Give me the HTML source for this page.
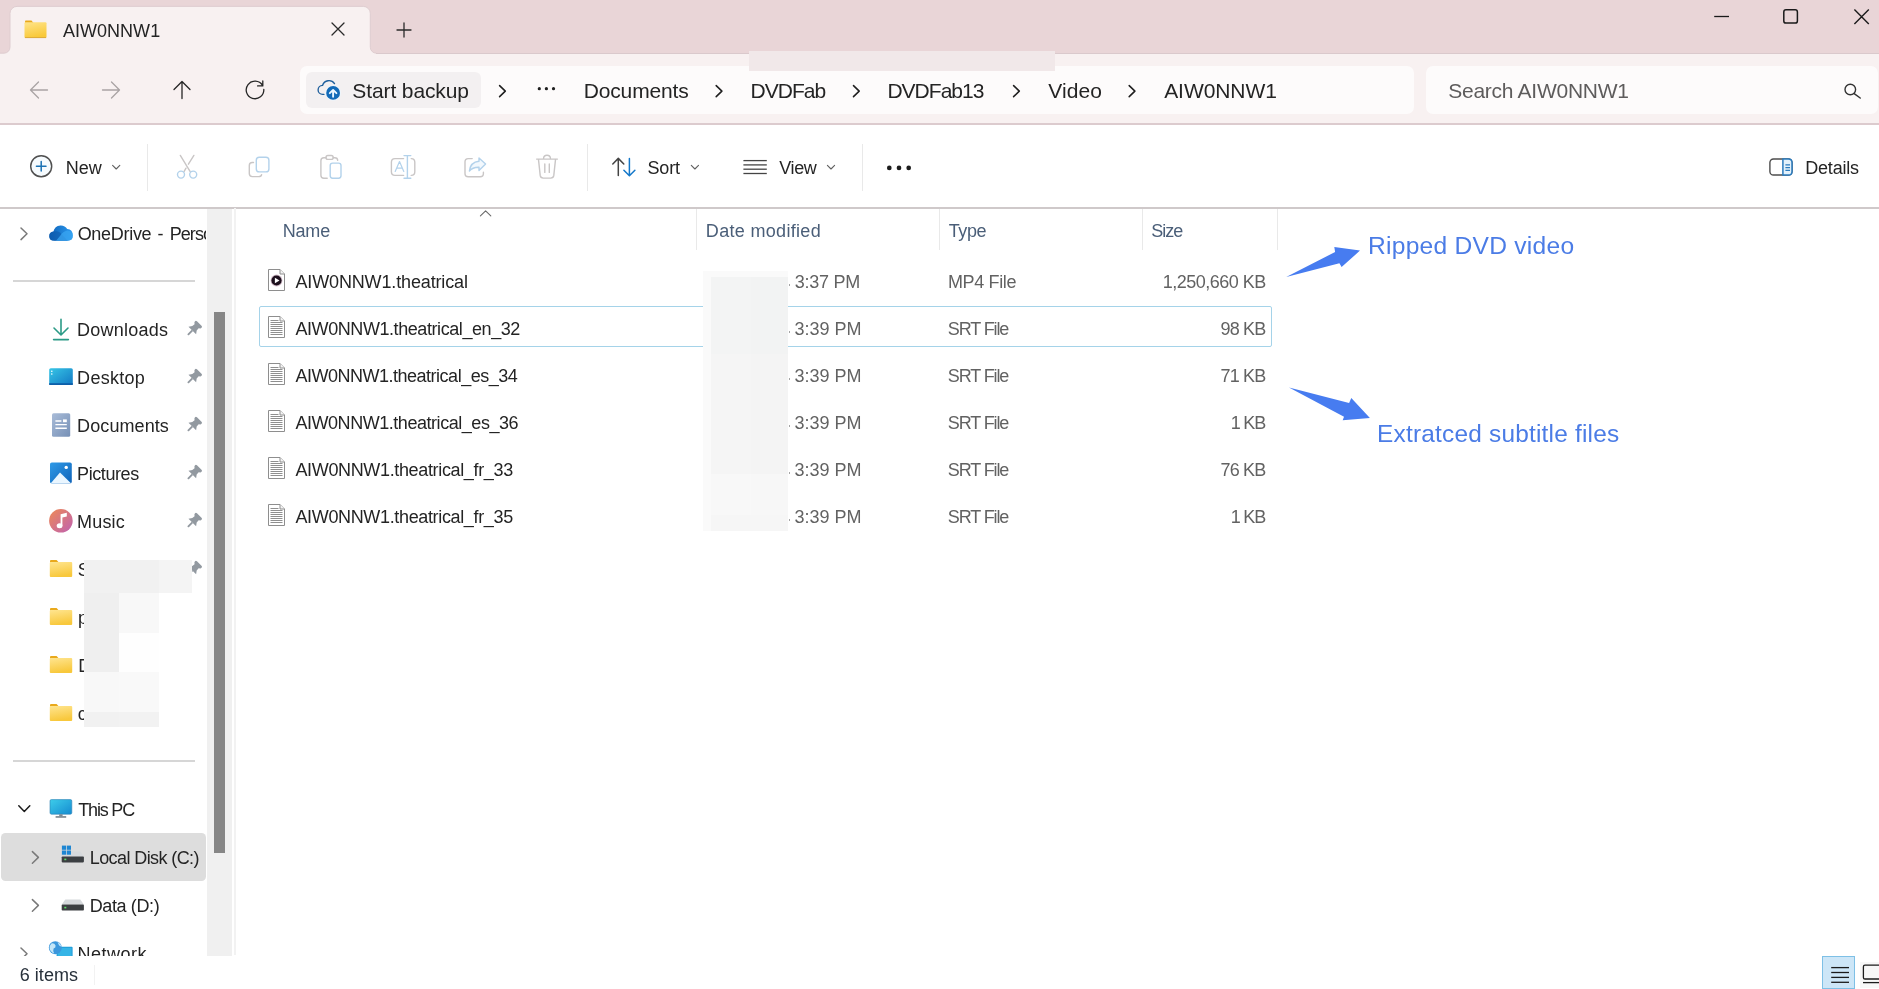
<!DOCTYPE html>
<html lang="en"><head><meta charset="utf-8"><title>AIW0NNW1</title>
<style>
html,body{margin:0;padding:0;}
body{width:1879px;height:989px;overflow:hidden;position:relative;background:#fff;font-family:'Liberation Sans',sans-serif;}
.a{position:absolute;}
.t{position:absolute;white-space:pre;line-height:1;}
svg{position:absolute;overflow:visible;}
.clip{position:absolute;overflow:hidden;}
#root{position:absolute;left:0;top:0;width:1879px;height:989px;will-change:transform;}

</style></head>
<body>
<div id="root">
<div class="a" style="left:0;top:0;width:1879px;height:53.6px;background:#e9d5d7"></div>
<div class="a" style="left:0;top:53.6px;width:1879px;height:70.4px;background:#f8f1f1"></div>
<svg style="left:0;top:0" width="400" height="60" viewBox="0 0 400 60">
<path d="M0 54.6 L0 53.2 L4 53.2 A6 6 0 0 0 10 47.2 L10 13.4 A7 7 0 0 1 17 6.4 L363.3 6.4 A7 7 0 0 1 370.3 13.4 L370.3 47.2 A6 6 0 0 0 376.3 53.2 L380.3 53.2 L380.3 54.6 Z" fill="#f8f1f1"/>
<path d="M0 53.2 L4 53.2 A6 6 0 0 0 10 47.2 L10 13.4 A7 7 0 0 1 17 6.4 L363.3 6.4 A7 7 0 0 1 370.3 13.4 L370.3 47.2 A6 6 0 0 0 376.3 53.2" fill="none" stroke="#dccbce" stroke-width="0.9"/>
</svg>
<div class="a" style="left:376.3px;top:52.6px;width:1503px;height:1.2px;background:#dac9cc"></div>
<div class="a" style="left:749px;top:51px;width:306px;height:19.5px;background:#f1e8e9"></div>
<svg style="left:24px;top:20px" width="24" height="19" viewBox="0 0 24 19">
<defs><linearGradient id="fg1" x1="0" y1="0" x2="0.3" y2="1"><stop offset="0" stop-color="#ffe48a"/><stop offset="1" stop-color="#f9c93a"/></linearGradient></defs>
<path d="M1 1.2 Q1 0.5 1.8 0.5 L7.5 0.5 L9.5 3 L1 3 Z" fill="#e9a91c"/>
<path d="M0.5 3.2 Q0.5 2.2 1.5 2.2 L21.5 2.2 Q22.5 2.2 22.5 3.2 L22.5 17 Q22.5 18 21.5 18 L1.5 18 Q0.5 18 0.5 17 Z" fill="url(#fg1)"/><path d="M1 17.6 L22 17.6" stroke="#d9a73a" stroke-width="0.9"/>
</svg>
<span class="t" style="left:62.92px;top:22.00px;font-size:18px;letter-spacing:0.033px;color:#242424;">AIW0NNW1</span>
<svg style="left:331px;top:22.4px" width="14" height="14" viewBox="0 0 14 14"><path d="M1 1 L13 13 M13 1 L1 13" stroke="#2a2a2a" stroke-width="1.3" fill="none" stroke-linecap="round"/></svg>
<svg style="left:396.4px;top:22.4px" width="16" height="16" viewBox="0 0 16 16"><path d="M8 1 L8 15 M1 8 L15 8" stroke="#2a2a2a" stroke-width="1.3" fill="none" stroke-linecap="round"/></svg>
<svg style="left:1700px;top:0" width="179" height="40" viewBox="0 0 179 40">
<path d="M14.2 16.5 L29 16.5" stroke="#1a1a1a" stroke-width="1.3" fill="none"/>
<rect x="83.8" y="9.7" width="13.6" height="13.4" rx="2.2" fill="none" stroke="#1a1a1a" stroke-width="1.5"/>
<path d="M154.4 9.6 L168.8 24 M168.8 9.6 L154.4 24" stroke="#1a1a1a" stroke-width="1.4" fill="none"/>
</svg>
<div class="a" style="left:0;top:123.4px;width:1879px;height:1.8px;background:#dccbce"></div>
<svg style="left:0;top:60px" width="300" height="60" viewBox="0 60 300 60">
<g fill="none" stroke="#a9a3a4" stroke-width="1.3" stroke-linecap="round" stroke-linejoin="round">
<path d="M47.5 90 L30.5 90 M38.5 82 L30.5 90 L38.5 98"/>
<path d="M102.5 90 L119.5 90 M111.5 82 L119.5 90 L111.5 98"/>
</g>
<g fill="none" stroke="#262626" stroke-width="1.3" stroke-linecap="round" stroke-linejoin="round">
<path d="M182 98.5 L182 81.5 M174 89.5 L182 81.5 L190 89.5"/>
<path d="M263.8 89.4 A8.8 8.8 0 1 1 262.5 85.3 M262.8 80.9 L262.8 85.9 L257.6 85.9" />
</g>
</svg>
<div class="a" style="left:300px;top:66px;width:1114px;height:48px;border-radius:7px;background:#fdfbfb"></div>
<div class="a" style="left:749px;top:66px;width:306px;height:4.5px;background:#f1e8e9"></div>
<div class="a" style="left:305.5px;top:72.2px;width:175.5px;height:35.6px;border-radius:6px;background:#f3f0f1"></div>
<svg style="left:310px;top:74px" width="40" height="32" viewBox="310 74 40 32">
<path d="M323.9 94.4 L322.7 94.4 A4.55 4.55 0 0 1 322.6 85.3 A6.7 6.7 0 0 1 334.5 83.6" fill="none" stroke="#1f5f9c" stroke-width="1.35" stroke-linecap="round"/>
<circle cx="333.1" cy="92.9" r="7.9" fill="#eef5fb"/>
<circle cx="333.1" cy="92.9" r="6.9" fill="#126ab8"/>
<path d="M333.1 96.7 L333.1 90.4 M329.8 93.2 L333.1 89.9 L336.4 93.2" fill="none" stroke="#eaf6ff" stroke-width="1.9" stroke-linecap="round" stroke-linejoin="round"/>
</svg>
<span class="t" style="left:352.36px;top:80.00px;font-size:21px;letter-spacing:-0.117px;color:#242424;">Start backup</span>
<div class="a" style="left:1426px;top:66px;width:451.5px;height:48px;border-radius:7px;background:#fdfbfb"></div>
<svg style="left:0;top:0" width="1879" height="125" viewBox="0 0 1879 125"><path d="M499.6 85.6 L505.3 91.1 L499.6 96.6" fill="none" stroke="#1f1f1f" stroke-width="1.55" stroke-linecap="round" stroke-linejoin="round"/><path d="M716.2 85.6 L721.9000000000001 91.1 L716.2 96.6" fill="none" stroke="#1f1f1f" stroke-width="1.55" stroke-linecap="round" stroke-linejoin="round"/><path d="M853.5 85.6 L859.2 91.1 L853.5 96.6" fill="none" stroke="#1f1f1f" stroke-width="1.55" stroke-linecap="round" stroke-linejoin="round"/><path d="M1013.6 85.6 L1019.3000000000001 91.1 L1013.6 96.6" fill="none" stroke="#1f1f1f" stroke-width="1.55" stroke-linecap="round" stroke-linejoin="round"/><path d="M1129.2 85.6 L1134.9 91.1 L1129.2 96.6" fill="none" stroke="#1f1f1f" stroke-width="1.55" stroke-linecap="round" stroke-linejoin="round"/><circle cx="539.3" cy="88.7" r="1.6" fill="#1f1f1f"/><circle cx="546.4" cy="88.7" r="1.6" fill="#1f1f1f"/><circle cx="553.5" cy="88.7" r="1.6" fill="#1f1f1f"/><circle cx="1850.3" cy="89.5" r="5.3" fill="none" stroke="#333" stroke-width="1.4"/><path d="M1854.2 93.6 L1860.2 98" stroke="#333" stroke-width="1.5" stroke-linecap="round"/></svg>
<span class="t" style="left:583.70px;top:80.00px;font-size:21px;letter-spacing:-0.140px;color:#242424;">Documents</span>
<span class="t" style="left:750.51px;top:80.00px;font-size:21px;letter-spacing:-0.977px;color:#242424;">DVDFab</span>
<span class="t" style="left:887.40px;top:80.00px;font-size:21px;letter-spacing:-0.975px;color:#242424;">DVDFab13</span>
<span class="t" style="left:1048.37px;top:80.00px;font-size:21px;letter-spacing:0.068px;color:#242424;">Video</span>
<span class="t" style="left:1164.18px;top:80.00px;font-size:21px;letter-spacing:-0.062px;color:#242424;">AIW0NNW1</span>
<span class="t" style="left:1448.30px;top:80.00px;font-size:21px;letter-spacing:-0.270px;color:#5e5c5c;">Search AIW0NNW1</span>
<div class="a" style="left:0;top:125px;width:1879px;height:82px;background:#ffffff"></div>
<div class="a" style="left:0;top:207px;width:1879px;height:1.6px;background:#cfc9ca"></div>
<div class="a" style="left:146.5px;top:144px;width:1.6px;height:46.5px;background:#e9e9e9"></div>
<div class="a" style="left:586.5px;top:144px;width:1.6px;height:46.5px;background:#e9e9e9"></div>
<div class="a" style="left:861.5px;top:144px;width:1.6px;height:46.5px;background:#e9e9e9"></div>
<svg style="left:0;top:125px" width="1879" height="82" viewBox="0 125 1879 82"><circle cx="41.2" cy="166.2" r="10.5" fill="#f6fbfe" stroke="#505050" stroke-width="1.45"/><path d="M41.2 161.4 L41.2 171 M36.4 166.2 L46 166.2" stroke="#1b72b4" stroke-width="1.5" stroke-linecap="round" fill="none"/><path d="M112.60000000000001 165.4 L116.2 169.0 L119.8 165.4" fill="none" stroke="#606060" stroke-width="1.1" stroke-linecap="round" stroke-linejoin="round"/><path d="M691.3 165.4 L694.9 169.0 L698.5 165.4" fill="none" stroke="#606060" stroke-width="1.1" stroke-linecap="round" stroke-linejoin="round"/><path d="M827.4 165.4 L831 169.0 L834.6 165.4" fill="none" stroke="#606060" stroke-width="1.1" stroke-linecap="round" stroke-linejoin="round"/><g fill="none" stroke-width="1.4" stroke-linecap="round"><path d="M180.3 155.4 L190.2 171.6 M193.9 155.4 L188.4 164.2 M186 168.2 L184 171.6" stroke="#c9c6c6"/><circle cx="181" cy="174.6" r="3.5" stroke="#b3d2eb"/><circle cx="193.2" cy="174.6" r="3.5" stroke="#b3d2eb"/></g><g fill="none" stroke-width="1.4" stroke-linecap="round"><path d="M253.5 162.5 L252.3 162.5 Q249.3 162.5 249.3 165.5 L249.3 173.6 Q249.3 176.6 252.3 176.6 L258.6 176.6 Q261.3 176.6 261.6 174.6" stroke="#c9c6c6"/><rect x="256.3" y="157.3" width="12.6" height="14.6" rx="3" stroke="#b3d2eb"/></g><g fill="none" stroke-width="1.4" stroke-linecap="round"><path d="M326 157.7 L323.9 157.7 Q320.9 157.7 320.9 160.7 L320.9 175.2 Q320.9 178.2 323.9 178.2 L327.2 178.2 M333.2 157.7 L334.8 157.7 Q337.6 157.7 337.7 160.4" stroke="#c9c6c6"/><rect x="326" y="155.5" width="7.2" height="3.9" rx="1.9" stroke="#c9c6c6"/><rect x="330.2" y="163.1" width="10.8" height="15.1" rx="2.4" stroke="#b3d2eb"/></g><g fill="none" stroke-width="1.4" stroke-linecap="round" stroke-linejoin="round"><path d="M403.6 158.6 L395 158.6 Q391.4 158.6 391.4 162.2 L391.4 171.8 Q391.4 175.4 395 175.4 L403.6 175.4 M411.2 158.6 Q414.8 158.6 414.8 162.2 L414.8 171.8 Q414.8 175.4 411.2 175.4" stroke="#c9c6c6"/><path d="M407.4 155.6 L407.4 178.2 M404 155.6 L410.8 155.6 M404 178.2 L410.8 178.2" stroke="#b3d2eb"/><path d="M395.2 171.4 L399.5 161.6 L403.8 171.4 M396.6 168.2 L402.4 168.2" stroke="#b3d2eb" stroke-width="1.2"/></g><g fill="none" stroke-width="1.4" stroke-linecap="round" stroke-linejoin="round"><path d="M472.2 158.6 L468.2 158.6 Q465 158.6 465 161.8 L465 173.6 Q465 176.8 468.2 176.8 L480.2 176.8 Q483.4 176.8 483.4 173.6 L483.4 172.2" stroke="#c9c6c6"/><path d="M479 157.9 L485.6 163.9 L479 170.5 L479 167.2 Q472.6 167 469.4 171 Q470.4 162 479 161.2 Z" stroke="#b3d2eb" fill="#f2f8fd"/></g><g fill="none" stroke="#c9c6c6" stroke-width="1.4" stroke-linecap="round" stroke-linejoin="round"><path d="M536.6 159.1 L557.4 159.1 M543.5 158.8 Q543.7 155.3 547 155.3 Q550.3 155.3 550.5 158.8 M538.5 159.6 L540.2 175.4 Q540.6 178.1 543.3 178.1 L550.7 178.1 Q553.4 178.1 553.8 175.4 L555.5 159.6 M544.8 164 L544.8 172.4 M549.3 164 L549.3 172.4"/></g><g fill="none" stroke-width="1.5" stroke-linecap="round" stroke-linejoin="round"><path d="M618.3 175.6 L618.3 158.6 M612.8 164 L618.3 158.4 L623.8 164" stroke="#444"/><path d="M629.4 158.6 L629.4 175.6 M623.9 170.2 L629.4 175.8 L634.9 170.2" stroke="#1377c9"/></g><path d="M743.4 160.6 L766.8 160.6" stroke="#444" stroke-width="1.3"/><path d="M743.4 164.9 L766.8 164.9" stroke="#444" stroke-width="1.3"/><path d="M743.4 169.2 L766.8 169.2" stroke="#444" stroke-width="1.3"/><path d="M743.4 173.5 L766.8 173.5" stroke="#444" stroke-width="1.3"/><circle cx="889.3" cy="167.9" r="2.35" fill="#1c1c1c"/><circle cx="899" cy="167.9" r="2.35" fill="#1c1c1c"/><circle cx="908.7" cy="167.9" r="2.35" fill="#1c1c1c"/><rect x="1769.9" y="159" width="22.1" height="16" rx="3.6" fill="none" stroke="#4d4d4d" stroke-width="1.4"/><path d="M1782.9 159 L1788.4 159 Q1792 159 1792 162.6 L1792 171.4 Q1792 175 1788.4 175 L1782.9 175 Z" fill="#e3f1fb" stroke="#2b7bbd" stroke-width="1.5"/><path d="M1785.4 164.8 L1790 164.8 M1785.4 167.6 L1790 167.6 M1785.4 170.4 L1790 170.4" stroke="#2b7bbd" stroke-width="1.2"/></svg>
<span class="t" style="left:65.75px;top:159.00px;font-size:18px;letter-spacing:0.038px;color:#242424;">New</span>
<span class="t" style="left:647.48px;top:159.00px;font-size:18px;letter-spacing:-0.123px;color:#242424;">Sort</span>
<span class="t" style="left:779.16px;top:159.00px;font-size:18px;letter-spacing:-0.342px;color:#242424;">View</span>
<span class="t" style="left:1805.30px;top:159.00px;font-size:18px;letter-spacing:-0.222px;color:#242424;">Details</span>
<div class="a" style="left:207px;top:208.6px;width:25px;height:747px;background:#f0f0f0"></div>
<div class="a" style="left:214px;top:312px;width:11px;height:540.5px;background:#868686"></div>
<div class="a" style="left:234px;top:208px;width:1.5px;height:747px;background:#f2f2f2"></div>
<div class="a" style="left:13px;top:280.3px;width:182px;height:1.6px;background:#d6d6d6"></div>
<div class="a" style="left:13px;top:760.2px;width:182px;height:1.6px;background:#d6d6d6"></div>
<div class="a" style="left:1px;top:833px;width:205px;height:48px;border-radius:4.5px;background:#dddddd"></div>
<div class="clip" style="left:0;top:208px;width:206px;height:747.6px">
<span class="t" style="left:77.68px;top:17.00px;font-size:18px;letter-spacing:-0.299px;color:#242424;">OneDrive</span>
<span class="t" style="left:157.47px;top:17.00px;font-size:18px;letter-spacing:0.075px;color:#242424;">-</span>
<span class="t" style="left:169.70px;top:17.00px;font-size:18px;letter-spacing:-0.921px;color:#242424;">Personal</span>
<span class="t" style="left:77.12px;top:113.00px;font-size:18px;letter-spacing:0.225px;color:#242424;">Downloads</span>
<span class="t" style="left:77.12px;top:161.00px;font-size:18px;letter-spacing:0.272px;color:#242424;">Desktop</span>
<span class="t" style="left:77.12px;top:209.00px;font-size:18px;letter-spacing:0.088px;color:#242424;">Documents</span>
<span class="t" style="left:77.12px;top:257.00px;font-size:18px;letter-spacing:-0.427px;color:#242424;">Pictures</span>
<span class="t" style="left:77.12px;top:305.00px;font-size:18px;letter-spacing:0.166px;color:#242424;">Music</span>
<span class="t" style="left:77.80px;top:353.00px;font-size:18px;letter-spacing:-1.416px;color:#242424;">S</span>
<span class="t" style="left:78.10px;top:401.00px;font-size:18px;letter-spacing:0.684px;color:#242424;">p</span>
<span class="t" style="left:78.20px;top:449.00px;font-size:18px;letter-spacing:0.600px;color:#242424;">D</span>
<span class="t" style="left:77.80px;top:497.00px;font-size:18px;letter-spacing:0.600px;color:#242424;">c</span>
<span class="t" style="left:78.28px;top:593.00px;font-size:18px;letter-spacing:-1.189px;color:#242424;">This PC</span>
<span class="t" style="left:89.75px;top:641.00px;font-size:18px;letter-spacing:-0.590px;color:#242424;">Local Disk (C:)</span>
<span class="t" style="left:89.75px;top:689.00px;font-size:18px;letter-spacing:-0.383px;color:#242424;">Data (D:)</span>
<span class="t" style="left:77.46px;top:737.00px;font-size:18px;letter-spacing:0.524px;color:#242424;">Network</span>
<svg style="left:0;top:0" width="206" height="747" viewBox="0 208 206 747"><defs>
<linearGradient id="fold" x1="0" y1="0" x2="0.25" y2="1"><stop offset="0" stop-color="#ffe590"/><stop offset="1" stop-color="#f8c83c"/></linearGradient>
<linearGradient id="desk" x1="0" y1="0" x2="1" y2="1"><stop offset="0" stop-color="#37c6e6"/><stop offset="1" stop-color="#1278c4"/></linearGradient>
<linearGradient id="docg" x1="0" y1="0" x2="1" y2="1"><stop offset="0" stop-color="#a9bcd8"/><stop offset="1" stop-color="#7690b6"/></linearGradient>
<linearGradient id="picg" x1="0" y1="0" x2="1" y2="1"><stop offset="0" stop-color="#2f9be8"/><stop offset="1" stop-color="#0f62b8"/></linearGradient>
<linearGradient id="musg" x1="0" y1="0" x2="1" y2="1"><stop offset="0" stop-color="#ee8a55"/><stop offset="1" stop-color="#bf61b2"/></linearGradient>
<linearGradient id="pcg" x1="0" y1="0" x2="1" y2="1"><stop offset="0" stop-color="#3dcdea"/><stop offset="1" stop-color="#158bd0"/></linearGradient>
<linearGradient id="odg" x1="0" y1="0" x2="1" y2="0"><stop offset="0" stop-color="#0f62b8"/><stop offset="1" stop-color="#2a9af0"/></linearGradient>
</defs><path d="M21 228.0 L27 233.8 L21 239.60000000000002" fill="none" stroke="#7a7a7a" stroke-width="1.5" stroke-linecap="round" stroke-linejoin="round"/><path d="M32.4 851.6 L38.4 857.4 L32.4 863.1999999999999" fill="none" stroke="#7a7a7a" stroke-width="1.5" stroke-linecap="round" stroke-linejoin="round"/><path d="M32.4 899.6 L38.4 905.4 L32.4 911.1999999999999" fill="none" stroke="#7a7a7a" stroke-width="1.5" stroke-linecap="round" stroke-linejoin="round"/><path d="M21 948.0 L27 953.8 L21 959.5999999999999" fill="none" stroke="#7a7a7a" stroke-width="1.5" stroke-linecap="round" stroke-linejoin="round"/><path d="M18.8 805.8 L24.3 811.5 L29.8 805.8" fill="none" stroke="#1b1b1b" stroke-width="1.5" stroke-linecap="round" stroke-linejoin="round"/><path d="M54.6 240.8 Q49.2 240.8 49.2 236.2 Q49.2 232.2 53.4 231.6 Q54.6 226 60.4 225.4 Q65 225.2 67.2 229 Q72.8 229.4 72.8 235.6 Q72.8 240.8 67.6 240.8 Z" fill="url(#odg)"/><path d="M53.4 231.6 Q57 230.4 60 232.6 L67.6 240.8 L54.6 240.8 Q49.2 240.8 49.2 236.2 Q49.2 232.2 53.4 231.6 Z" fill="#0d58a8" opacity="0.55"/><path d="M60 236 Q63 231.4 67.2 230.6 Q72.8 231 72.8 235.6 Q72.8 240.8 67.6 240.8 L56 240.8 Z" fill="#3aa5f2" opacity="0.75"/><g fill="none" stroke="#2b9a86" stroke-width="1.6" stroke-linecap="round" stroke-linejoin="round"><path d="M61 319.4 L61 334.4 M54 328 L61 335 L68 328 M53.6 339.6 L68.4 339.6"/></g><rect x="49.2" y="368.2" width="23.6" height="16.8" rx="1.6" fill="url(#desk)"/><rect x="49.2" y="383.2" width="23.6" height="1.8" fill="#0d5ea8"/><circle cx="51.8" cy="371.2" r="0.8" fill="#fff"/><circle cx="51.8" cy="374" r="0.8" fill="#fff"/><rect x="52" y="413.2" width="18.2" height="23.6" rx="1.6" fill="url(#docg)"/><path d="M55.4 421 L61.4 421 M55.4 424.6 L66.8 424.6 M55.4 428.2 L66.8 428.2" stroke="#fff" stroke-width="1.4"/><rect x="63" y="419.4" width="3.8" height="2.8" fill="#fff"/><rect x="50" y="462.4" width="21.8" height="21.2" rx="1.8" fill="url(#picg)"/><path d="M50.6 483.6 L60 472.6 L71.2 483.6 Z" fill="#eaf6ff"/><circle cx="66.2" cy="467.4" r="1.7" fill="#fff"/><circle cx="60.9" cy="520.8" r="11.8" fill="url(#musg)"/><path d="M60.6 525.6 L60.6 514.2 L66.8 512.8 L66.8 516.6 L62.4 517.6 L62.4 525.8 Z" fill="#fff"/><ellipse cx="59.6" cy="525.8" rx="2.9" ry="2.5" fill="#fff"/><path d="M50 561.0 Q50 560.0 51 560.0 L56.6 560.0 L58.8 562.6 L50 562.6 Z" fill="#e9a91c"/><path d="M49.8 563.0 Q49.8 562.0 50.8 562.0 L71.2 562.0 Q72.2 562.0 72.2 563.0 L72.2 576.0 Q72.2 577.0 71.2 577.0 L50.8 577.0 Q49.8 577.0 49.8 576.0 Z" fill="url(#fold)"/><path d="M50 609.0 Q50 608.0 51 608.0 L56.6 608.0 L58.8 610.6 L50 610.6 Z" fill="#e9a91c"/><path d="M49.8 611.0 Q49.8 610.0 50.8 610.0 L71.2 610.0 Q72.2 610.0 72.2 611.0 L72.2 624.0 Q72.2 625.0 71.2 625.0 L50.8 625.0 Q49.8 625.0 49.8 624.0 Z" fill="url(#fold)"/><path d="M50 657.0 Q50 656.0 51 656.0 L56.6 656.0 L58.8 658.6 L50 658.6 Z" fill="#e9a91c"/><path d="M49.8 659.0 Q49.8 658.0 50.8 658.0 L71.2 658.0 Q72.2 658.0 72.2 659.0 L72.2 672.0 Q72.2 673.0 71.2 673.0 L50.8 673.0 Q49.8 673.0 49.8 672.0 Z" fill="url(#fold)"/><path d="M50 705.0 Q50 704.0 51 704.0 L56.6 704.0 L58.8 706.6 L50 706.6 Z" fill="#e9a91c"/><path d="M49.8 707.0 Q49.8 706.0 50.8 706.0 L71.2 706.0 Q72.2 706.0 72.2 707.0 L72.2 720.0 Q72.2 721.0 71.2 721.0 L50.8 721.0 Q49.8 721.0 49.8 720.0 Z" fill="url(#fold)"/><g transform="translate(193.5 329.3) rotate(45)" fill="#9299a0"><path d="M-3.2 -8.1 L3.2 -8.1 Q4.7 -8.1 4.6 -6.8 L4.3 -5.6 L2.9 -4.4 L3.1 -1.4 L5.4 1.7 L-5.4 1.7 L-3.1 -1.4 L-2.9 -4.4 L-4.3 -5.6 L-4.6 -6.8 Q-4.7 -8.1 -3.2 -8.1 Z"/><path d="M-0.95 1.6 L0.95 1.6 L0.95 7.2 Q0.95 8.1 0 8.1 Q-0.95 8.1 -0.95 7.2 Z"/></g><g transform="translate(193.5 377.3) rotate(45)" fill="#9299a0"><path d="M-3.2 -8.1 L3.2 -8.1 Q4.7 -8.1 4.6 -6.8 L4.3 -5.6 L2.9 -4.4 L3.1 -1.4 L5.4 1.7 L-5.4 1.7 L-3.1 -1.4 L-2.9 -4.4 L-4.3 -5.6 L-4.6 -6.8 Q-4.7 -8.1 -3.2 -8.1 Z"/><path d="M-0.95 1.6 L0.95 1.6 L0.95 7.2 Q0.95 8.1 0 8.1 Q-0.95 8.1 -0.95 7.2 Z"/></g><g transform="translate(193.5 425.3) rotate(45)" fill="#9299a0"><path d="M-3.2 -8.1 L3.2 -8.1 Q4.7 -8.1 4.6 -6.8 L4.3 -5.6 L2.9 -4.4 L3.1 -1.4 L5.4 1.7 L-5.4 1.7 L-3.1 -1.4 L-2.9 -4.4 L-4.3 -5.6 L-4.6 -6.8 Q-4.7 -8.1 -3.2 -8.1 Z"/><path d="M-0.95 1.6 L0.95 1.6 L0.95 7.2 Q0.95 8.1 0 8.1 Q-0.95 8.1 -0.95 7.2 Z"/></g><g transform="translate(193.5 473.3) rotate(45)" fill="#9299a0"><path d="M-3.2 -8.1 L3.2 -8.1 Q4.7 -8.1 4.6 -6.8 L4.3 -5.6 L2.9 -4.4 L3.1 -1.4 L5.4 1.7 L-5.4 1.7 L-3.1 -1.4 L-2.9 -4.4 L-4.3 -5.6 L-4.6 -6.8 Q-4.7 -8.1 -3.2 -8.1 Z"/><path d="M-0.95 1.6 L0.95 1.6 L0.95 7.2 Q0.95 8.1 0 8.1 Q-0.95 8.1 -0.95 7.2 Z"/></g><g transform="translate(193.5 521.3) rotate(45)" fill="#9299a0"><path d="M-3.2 -8.1 L3.2 -8.1 Q4.7 -8.1 4.6 -6.8 L4.3 -5.6 L2.9 -4.4 L3.1 -1.4 L5.4 1.7 L-5.4 1.7 L-3.1 -1.4 L-2.9 -4.4 L-4.3 -5.6 L-4.6 -6.8 Q-4.7 -8.1 -3.2 -8.1 Z"/><path d="M-0.95 1.6 L0.95 1.6 L0.95 7.2 Q0.95 8.1 0 8.1 Q-0.95 8.1 -0.95 7.2 Z"/></g><g transform="translate(193.5 569.3) rotate(45)" fill="#9299a0"><path d="M-3.2 -8.1 L3.2 -8.1 Q4.7 -8.1 4.6 -6.8 L4.3 -5.6 L2.9 -4.4 L3.1 -1.4 L5.4 1.7 L-5.4 1.7 L-3.1 -1.4 L-2.9 -4.4 L-4.3 -5.6 L-4.6 -6.8 Q-4.7 -8.1 -3.2 -8.1 Z"/><path d="M-0.95 1.6 L0.95 1.6 L0.95 7.2 Q0.95 8.1 0 8.1 Q-0.95 8.1 -0.95 7.2 Z"/></g><rect x="50" y="799.6" width="21.8" height="14.6" rx="1.4" fill="url(#pcg)"/><rect x="50" y="799.6" width="21.8" height="14.6" rx="1.4" fill="none" stroke="#2c7fb4" stroke-width="0.6"/><path d="M59.2 814.2 L62.6 814.2 L62.6 816.2 L59.2 816.2 Z" fill="#7d8a94"/><rect x="55.6" y="816.2" width="10.6" height="1.5" fill="#6d7a84"/><path d="M65.3 851.4 L80.30000000000001 851.4 L83.9 856.4 L61.7 856.4 Z" fill="#d6d9dc"/><rect x="61.7" y="856.4" width="22.2" height="6" rx="0.8" fill="#3c3f42"/><rect x="64.3" y="858.6" width="2" height="1.6" fill="#5fdc6a"/><rect x="61.9" y="845.6" width="4.2" height="4.2" fill="#1e86d2"/><rect x="66.8" y="845.6" width="4.2" height="4.2" fill="#1e86d2"/><rect x="61.9" y="850.5" width="4.2" height="4.2" fill="#1e86d2"/><rect x="66.8" y="850.5" width="4.2" height="4.2" fill="#1e86d2"/><path d="M65.3 899.6 L80.30000000000001 899.6 L83.9 904.6 L61.7 904.6 Z" fill="#d6d9dc"/><rect x="61.7" y="904.6" width="22.2" height="6" rx="0.8" fill="#3c3f42"/><rect x="64.3" y="906.8000000000001" width="2" height="1.6" fill="#5fdc6a"/><rect x="56.6" y="946.8" width="16" height="12" rx="1" fill="#1f9bd8"/><rect x="57.6" y="947.8" width="14" height="10" fill="#35b4e6"/><circle cx="55.3" cy="947.7" r="6.5" fill="#3b97dc"/><path d="M51.4 943.4 Q54.6 943 55.6 945.4 Q56 947.6 53.6 948.6 Q52.6 951 54.2 953.4 Q50.4 952 49.6 948.4 Q49.6 945 51.4 943.4 Z M57.6 942 Q60.6 943.4 61.4 946.6 Q59.4 946.4 58.6 944.6 Z" fill="#c4e6f8"/></svg>
</div>
<div class="a" style="left:84.2px;top:560.4px;width:34.8px;height:32.6px;background:#f1f1f1"></div>
<div class="a" style="left:119px;top:560.4px;width:40.0px;height:32.6px;background:#f1f1f1"></div>
<div class="a" style="left:159px;top:560.4px;width:33.0px;height:32.6px;background:#f4f4f4"></div>
<div class="a" style="left:84.2px;top:593px;width:34.8px;height:40.0px;background:#efefef"></div>
<div class="a" style="left:119px;top:593px;width:40.0px;height:40.0px;background:#f8f8f8"></div>
<div class="a" style="left:84.2px;top:633px;width:34.8px;height:39.4px;background:#efefef"></div>
<div class="a" style="left:119px;top:633px;width:40.0px;height:39.4px;background:#fefefe"></div>
<div class="a" style="left:84.2px;top:672.4px;width:34.8px;height:40.0px;background:#f8f8f8"></div>
<div class="a" style="left:119px;top:672.4px;width:40.0px;height:40.0px;background:#f9f9f9"></div>
<div class="a" style="left:84.2px;top:712.4px;width:34.8px;height:14.2px;background:#f1f1f1"></div>
<div class="a" style="left:119px;top:712.4px;width:40.0px;height:14.2px;background:#f2f2f2"></div>
<div class="a" style="left:0;top:955.6px;width:1879px;height:33.4px;background:#ffffff"></div>
<span class="t" style="left:19.66px;top:966.00px;font-size:18px;letter-spacing:0.067px;color:#27303a;">6 items</span>
<div class="a" style="left:94px;top:965px;width:1px;height:20px;background:#f2f2f2"></div>
<div class="a" style="left:1822.2px;top:956.2px;width:32.8px;height:33px;background:#cde6f7;border:1.2px solid #7ec0e6;box-sizing:border-box"></div>
<div class="a" style="left:1860px;top:961.5px;width:19px;height:26px;background:#f7f7f7"></div>
<svg style="left:1800px;top:950px" width="79" height="39" viewBox="1800 950 79 39"><path d="M1831.2 967.6 L1849 967.6" stroke="#1b1b1b" stroke-width="1.3"/><path d="M1831.2 972.5 L1849 972.5" stroke="#1b1b1b" stroke-width="1.3"/><path d="M1831.2 977.4 L1849 977.4" stroke="#1b1b1b" stroke-width="1.3"/><path d="M1831.2 982.3 L1849 982.3" stroke="#1b1b1b" stroke-width="1.3"/><rect x="1863.4" y="965.2" width="20" height="13.8" rx="1.6" fill="none" stroke="#1b1b1b" stroke-width="1.3"/><path d="M1863 982.6 L1879 982.6" stroke="#1b1b1b" stroke-width="1.3"/></svg>
<div class="a" style="left:696.2px;top:209px;width:1.2px;height:41px;background:#e9e9e9"></div>
<div class="a" style="left:939.2px;top:209px;width:1.2px;height:41px;background:#e9e9e9"></div>
<div class="a" style="left:1141.6px;top:209px;width:1.2px;height:41px;background:#e9e9e9"></div>
<div class="a" style="left:1277px;top:209px;width:1.2px;height:41px;background:#e9e9e9"></div>
<span class="t" style="left:282.76px;top:222.00px;font-size:18px;letter-spacing:-0.198px;color:#4a5e78;">Name</span>
<span class="t" style="left:705.87px;top:222.00px;font-size:18px;letter-spacing:0.314px;color:#4a5e78;">Date modified</span>
<span class="t" style="left:948.74px;top:222.00px;font-size:18px;letter-spacing:-0.384px;color:#4a5e78;">Type</span>
<span class="t" style="left:1151.26px;top:222.00px;font-size:18px;letter-spacing:-1.031px;color:#4a5e78;">Size</span>
<svg style="left:476px;top:208px" width="20" height="12" viewBox="476 208 20 12"><path d="M480.4 215.8 L485.6 210.8 L490.8 215.8" fill="none" stroke="#6a6a6a" stroke-width="1.1" stroke-linecap="round" stroke-linejoin="round"/></svg>
<div class="a" style="left:259px;top:306.4px;width:1012.6px;height:40.4px;border:1.2px solid #a5d3e9;border-radius:2px;box-sizing:border-box;background:#fff"></div>
<span class="t" style="left:295.44px;top:273.00px;font-size:18px;letter-spacing:-0.142px;color:#242424;">AIW0NNW1.theatrical</span>
<span class="t" style="left:794.68px;top:273.00px;font-size:18px;letter-spacing:-0.251px;color:#626262;">3:37 PM</span>
<span class="t" style="left:947.94px;top:273.00px;font-size:18px;letter-spacing:-0.345px;color:#626262;">MP4 File</span>
<span class="t" style="left:1162.81px;top:273.00px;font-size:18px;letter-spacing:-0.506px;color:#626262;">1,250,660 KB</span>
<div class="a" style="left:788.5px;top:284.4px;width:1.3px;height:1.5px;background:#a4a4a4"></div>
<span class="t" style="left:295.44px;top:320.00px;font-size:18px;letter-spacing:-0.426px;color:#242424;">AIW0NNW1.theatrical_en_32</span>
<span class="t" style="left:794.61px;top:320.00px;font-size:18px;letter-spacing:-0.023px;color:#626262;">3:39 PM</span>
<span class="t" style="left:947.77px;top:320.00px;font-size:18px;letter-spacing:-1.119px;color:#626262;">SRT File</span>
<span class="t" style="left:1220.56px;top:320.00px;font-size:18px;letter-spacing:-0.817px;color:#626262;">98 KB</span>
<div class="a" style="left:788.5px;top:331.4px;width:1.3px;height:1.5px;background:#a4a4a4"></div>
<span class="t" style="left:295.44px;top:367.00px;font-size:18px;letter-spacing:-0.491px;color:#242424;">AIW0NNW1.theatrical_es_34</span>
<span class="t" style="left:794.61px;top:367.00px;font-size:18px;letter-spacing:-0.023px;color:#626262;">3:39 PM</span>
<span class="t" style="left:947.77px;top:367.00px;font-size:18px;letter-spacing:-1.119px;color:#626262;">SRT File</span>
<span class="t" style="left:1220.56px;top:367.00px;font-size:18px;letter-spacing:-0.817px;color:#626262;">71 KB</span>
<div class="a" style="left:788.5px;top:378.4px;width:1.3px;height:1.5px;background:#a4a4a4"></div>
<span class="t" style="left:295.44px;top:414.00px;font-size:18px;letter-spacing:-0.457px;color:#242424;">AIW0NNW1.theatrical_es_36</span>
<span class="t" style="left:794.61px;top:414.00px;font-size:18px;letter-spacing:-0.023px;color:#626262;">3:39 PM</span>
<span class="t" style="left:947.77px;top:414.00px;font-size:18px;letter-spacing:-1.119px;color:#626262;">SRT File</span>
<span class="t" style="left:1230.64px;top:414.00px;font-size:18px;letter-spacing:-1.132px;color:#626262;">1 KB</span>
<div class="a" style="left:788.5px;top:425.4px;width:1.3px;height:1.5px;background:#a4a4a4"></div>
<span class="t" style="left:295.44px;top:461.00px;font-size:18px;letter-spacing:-0.349px;color:#242424;">AIW0NNW1.theatrical_fr_33</span>
<span class="t" style="left:794.61px;top:461.00px;font-size:18px;letter-spacing:-0.023px;color:#626262;">3:39 PM</span>
<span class="t" style="left:947.77px;top:461.00px;font-size:18px;letter-spacing:-1.119px;color:#626262;">SRT File</span>
<span class="t" style="left:1220.56px;top:461.00px;font-size:18px;letter-spacing:-0.817px;color:#626262;">76 KB</span>
<div class="a" style="left:788.5px;top:472.4px;width:1.3px;height:1.5px;background:#a4a4a4"></div>
<span class="t" style="left:295.44px;top:508.00px;font-size:18px;letter-spacing:-0.348px;color:#242424;">AIW0NNW1.theatrical_fr_35</span>
<span class="t" style="left:794.61px;top:508.00px;font-size:18px;letter-spacing:-0.023px;color:#626262;">3:39 PM</span>
<span class="t" style="left:947.77px;top:508.00px;font-size:18px;letter-spacing:-1.119px;color:#626262;">SRT File</span>
<span class="t" style="left:1230.64px;top:508.00px;font-size:18px;letter-spacing:-1.132px;color:#626262;">1 KB</span>
<div class="a" style="left:788.5px;top:519.4px;width:1.3px;height:1.5px;background:#a4a4a4"></div>
<svg style="left:260px;top:260px" width="40" height="280" viewBox="260 260 40 280"><path d="M268.5 269.5 L280.0 269.5 L284.5 274.0 L284.5 290.5 L268.5 290.5 Z" fill="#fff" stroke="#8e8e8e" stroke-width="1"/><path d="M280.0 269.5 L280.0 274.0 L284.5 274.0" fill="#f4f4f4" stroke="#8e8e8e" stroke-width="1"/><circle cx="276.5" cy="280.5" r="5.9" fill="#b08aa0" opacity="0.55"/><circle cx="276.5" cy="280.5" r="5.1" fill="#1c0f1c"/><path d="M274.9 277.7 L279.5 280.5 L274.9 283.3 Z" fill="#fff"/><path d="M268.5 316.5 L280.0 316.5 L284.5 321.0 L284.5 337.5 L268.5 337.5 Z" fill="#fff" stroke="#8e8e8e" stroke-width="1"/><path d="M280.0 316.5 L280.0 321.0 L284.5 321.0" fill="#f4f4f4" stroke="#8e8e8e" stroke-width="1"/><path d="M270.5 320.50 L278.5 320.50" stroke="#8f8f8f" stroke-width="1"/><path d="M270.5 322.50 L282.5 322.50" stroke="#8f8f8f" stroke-width="1"/><path d="M270.5 324.50 L282.5 324.50" stroke="#8f8f8f" stroke-width="1"/><path d="M270.5 326.50 L282.5 326.50" stroke="#8f8f8f" stroke-width="1"/><path d="M270.5 328.50 L282.5 328.50" stroke="#8f8f8f" stroke-width="1"/><path d="M270.5 330.50 L282.5 330.50" stroke="#8f8f8f" stroke-width="1"/><path d="M270.5 332.50 L282.5 332.50" stroke="#8f8f8f" stroke-width="1"/><path d="M270.5 334.50 L282.5 334.50" stroke="#8f8f8f" stroke-width="1"/><path d="M268.5 363.5 L280.0 363.5 L284.5 368.0 L284.5 384.5 L268.5 384.5 Z" fill="#fff" stroke="#8e8e8e" stroke-width="1"/><path d="M280.0 363.5 L280.0 368.0 L284.5 368.0" fill="#f4f4f4" stroke="#8e8e8e" stroke-width="1"/><path d="M270.5 367.50 L278.5 367.50" stroke="#8f8f8f" stroke-width="1"/><path d="M270.5 369.50 L282.5 369.50" stroke="#8f8f8f" stroke-width="1"/><path d="M270.5 371.50 L282.5 371.50" stroke="#8f8f8f" stroke-width="1"/><path d="M270.5 373.50 L282.5 373.50" stroke="#8f8f8f" stroke-width="1"/><path d="M270.5 375.50 L282.5 375.50" stroke="#8f8f8f" stroke-width="1"/><path d="M270.5 377.50 L282.5 377.50" stroke="#8f8f8f" stroke-width="1"/><path d="M270.5 379.50 L282.5 379.50" stroke="#8f8f8f" stroke-width="1"/><path d="M270.5 381.50 L282.5 381.50" stroke="#8f8f8f" stroke-width="1"/><path d="M268.5 410.5 L280.0 410.5 L284.5 415.0 L284.5 431.5 L268.5 431.5 Z" fill="#fff" stroke="#8e8e8e" stroke-width="1"/><path d="M280.0 410.5 L280.0 415.0 L284.5 415.0" fill="#f4f4f4" stroke="#8e8e8e" stroke-width="1"/><path d="M270.5 414.50 L278.5 414.50" stroke="#8f8f8f" stroke-width="1"/><path d="M270.5 416.50 L282.5 416.50" stroke="#8f8f8f" stroke-width="1"/><path d="M270.5 418.50 L282.5 418.50" stroke="#8f8f8f" stroke-width="1"/><path d="M270.5 420.50 L282.5 420.50" stroke="#8f8f8f" stroke-width="1"/><path d="M270.5 422.50 L282.5 422.50" stroke="#8f8f8f" stroke-width="1"/><path d="M270.5 424.50 L282.5 424.50" stroke="#8f8f8f" stroke-width="1"/><path d="M270.5 426.50 L282.5 426.50" stroke="#8f8f8f" stroke-width="1"/><path d="M270.5 428.50 L282.5 428.50" stroke="#8f8f8f" stroke-width="1"/><path d="M268.5 457.5 L280.0 457.5 L284.5 462.0 L284.5 478.5 L268.5 478.5 Z" fill="#fff" stroke="#8e8e8e" stroke-width="1"/><path d="M280.0 457.5 L280.0 462.0 L284.5 462.0" fill="#f4f4f4" stroke="#8e8e8e" stroke-width="1"/><path d="M270.5 461.50 L278.5 461.50" stroke="#8f8f8f" stroke-width="1"/><path d="M270.5 463.50 L282.5 463.50" stroke="#8f8f8f" stroke-width="1"/><path d="M270.5 465.50 L282.5 465.50" stroke="#8f8f8f" stroke-width="1"/><path d="M270.5 467.50 L282.5 467.50" stroke="#8f8f8f" stroke-width="1"/><path d="M270.5 469.50 L282.5 469.50" stroke="#8f8f8f" stroke-width="1"/><path d="M270.5 471.50 L282.5 471.50" stroke="#8f8f8f" stroke-width="1"/><path d="M270.5 473.50 L282.5 473.50" stroke="#8f8f8f" stroke-width="1"/><path d="M270.5 475.50 L282.5 475.50" stroke="#8f8f8f" stroke-width="1"/><path d="M268.5 504.5 L280.0 504.5 L284.5 509.0 L284.5 525.5 L268.5 525.5 Z" fill="#fff" stroke="#8e8e8e" stroke-width="1"/><path d="M280.0 504.5 L280.0 509.0 L284.5 509.0" fill="#f4f4f4" stroke="#8e8e8e" stroke-width="1"/><path d="M270.5 508.50 L278.5 508.50" stroke="#8f8f8f" stroke-width="1"/><path d="M270.5 510.50 L282.5 510.50" stroke="#8f8f8f" stroke-width="1"/><path d="M270.5 512.50 L282.5 512.50" stroke="#8f8f8f" stroke-width="1"/><path d="M270.5 514.50 L282.5 514.50" stroke="#8f8f8f" stroke-width="1"/><path d="M270.5 516.50 L282.5 516.50" stroke="#8f8f8f" stroke-width="1"/><path d="M270.5 518.50 L282.5 518.50" stroke="#8f8f8f" stroke-width="1"/><path d="M270.5 520.50 L282.5 520.50" stroke="#8f8f8f" stroke-width="1"/><path d="M270.5 522.50 L282.5 522.50" stroke="#8f8f8f" stroke-width="1"/></svg>
<div class="a" style="left:703.2px;top:270.5px;width:84.5px;height:260.5px;background:#fafafa"></div>
<div class="a" style="left:711px;top:277px;width:40.0px;height:77px;background:#f3f4f4"></div>
<div class="a" style="left:751px;top:277px;width:36.7px;height:77px;background:#f2f3f3"></div>
<div class="a" style="left:711px;top:354px;width:40.0px;height:120px;background:#f5f5f5"></div>
<div class="a" style="left:751px;top:354px;width:36.7px;height:120px;background:#f4f4f4"></div>
<div class="a" style="left:711px;top:474px;width:40.0px;height:41px;background:#f8f8f8"></div>
<div class="a" style="left:751px;top:474px;width:36.7px;height:41px;background:#f7f7f7"></div>
<div class="a" style="left:711px;top:515px;width:76.7px;height:16px;background:#f6f6f6"></div>
<svg style="left:1280px;top:240px" width="100" height="190" viewBox="1280 240 100 190">
<path d="M1286.2 277 L1335.1 252 L1334.3 247.1 L1360 250.6 L1341.6 267.1 L1339.4 263.3 Z" fill="#477cf0"/>
<path d="M1289 387.4 L1349.1 403 L1351.3 398.1 L1369.9 418.1 L1342.7 420.3 L1344 416.8 Z" fill="#477cf0"/>
</svg>
<span class="t" style="left:1368.00px;top:234.20px;font-size:24.6px;letter-spacing:0.251px;color:#4b7ce6;">Ripped DVD video</span>
<span class="t" style="left:1377.10px;top:422.30px;font-size:24.4px;letter-spacing:0.211px;color:#4b7ce6;">Extratced subtitle files</span>
</div>
</body></html>
